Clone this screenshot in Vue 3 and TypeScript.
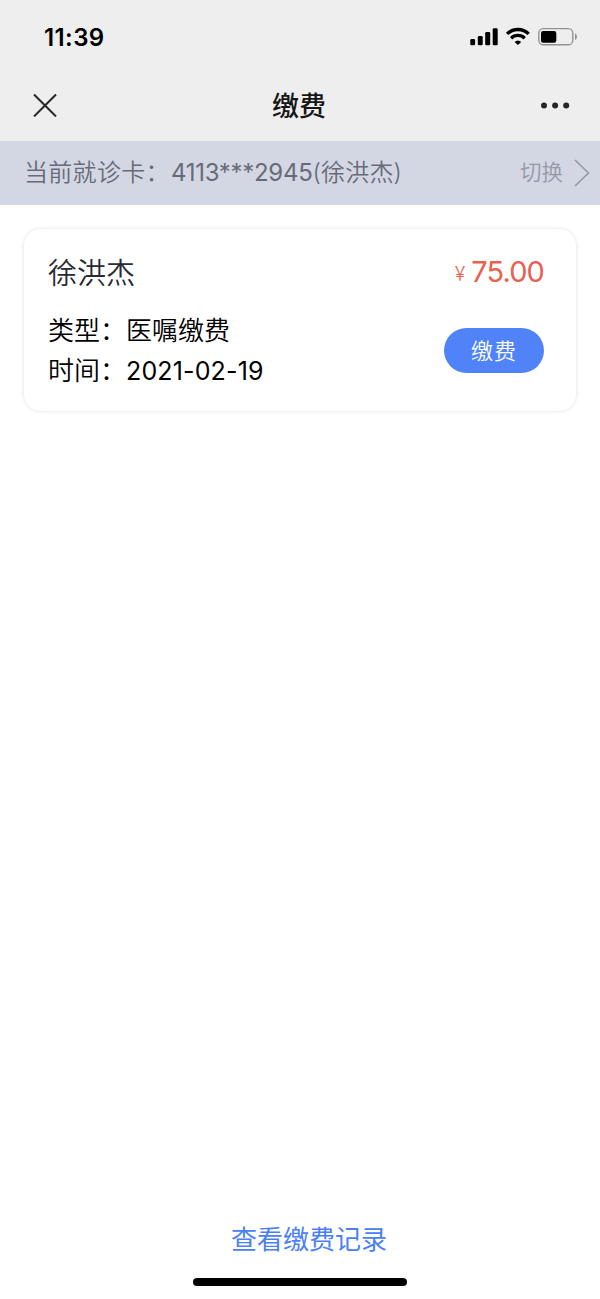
<script setup lang="ts">
interface Field {
  label: string
  value: string
  kind: string
}

const patient = '徐洪杰'
const cardNumber = '4113***2945'
const fields: Field[] = [
  { label: '类型：', value: '医嘱缴费', kind: 'han' },
  { label: '时间：', value: '2021-02-19', kind: 'date' },
]
</script>

<template>
  <div class="screen">
    <header class="top">
      <div class="status">
        <span class="clock">11:39</span>
        <svg class="indicators" width="110" height="20" viewBox="0 0 110 20">
          <rect x="0.3" y="12" width="4.8" height="6.2" rx="1.3" />
          <rect x="7.8" y="9" width="4.9" height="9.2" rx="1.3" />
          <rect x="15.2" y="5" width="5" height="13.2" rx="1.3" />
          <rect x="22.7" y="1.3" width="5" height="16.9" rx="1.3" />
          <g fill="none" stroke="#000" stroke-width="3.3">
            <path d="M37.1 6.9a15.5 15.5 0 0 1 21.6 0" />
            <path d="M41.1 11.2a9.8 9.8 0 0 1 13.6 0" />
          </g>
          <path d="M47.9 18.1 44.6 14.9a4.9 4.9 0 0 1 6.6 0z" />
          <rect x="68.8" y="1.6" width="34" height="16.2" rx="4.6" fill="none" stroke="#929292" stroke-width="1.4" />
          <rect x="71" y="4" width="15.3" height="11.8" rx="2.2" />
          <path d="M105 6.5c2.6.7 2.6 5.8 0 6.5z" fill="#929292" />
        </svg>
      </div>
      <div class="nav">
        <svg class="close" width="24" height="24" viewBox="0 0 24 24">
          <path d="M1 1.4 23 23.4M23 1.4 1 23.4" fill="none" stroke="#262729" stroke-width="2.1" />
        </svg>
        <h1 class="title">缴费</h1>
        <svg class="more" width="30" height="8" viewBox="0 0 30 8">
          <circle cx="4" cy="4.6" r="3" />
          <circle cx="15.1" cy="4.6" r="3" />
          <circle cx="26.2" cy="4.6" r="3" />
        </svg>
      </div>
    </header>

    <div class="current">
      <span class="current-label">当前就诊卡：</span>
      <span class="current-number">{{ cardNumber }}</span>
      <span class="current-name">({{ patient }})</span>
      <span class="switch">切换</span>
      <svg class="chevron" width="16" height="28" viewBox="0 0 16 28">
        <path d="M1 1 14.5 14 1 27" fill="none" stroke="#9698a8" stroke-width="1.6" />
      </svg>
    </div>

    <main class="body">
      <section class="card">
        <div class="info">
          <h2 class="name">{{ patient }}</h2>
          <div v-for="f in fields" :key="f.label" class="field">
            <span class="label">{{ f.label }}</span>
            <span :class="f.kind">{{ f.value }}</span>
          </div>
        </div>
        <div class="side">
          <div class="price"><span class="yen">￥</span><span class="amount">75.00</span></div>
          <button class="pay">缴费</button>
        </div>
      </section>
    </main>

    <footer class="foot">
      <a class="records">查看缴费记录</a>
      <div class="home"></div>
    </footer>
  </div>
</template>

<style>
body {
  margin: 0;
  background: #fff;
}
</style>

<style scoped>
.screen {
  display: flex;
  flex-direction: column;
  width: 600px;
  height: 1299px;
  overflow: hidden;
  background: #fff;
  color: #000;
  font-family: Inter, "Noto Sans CJK SC", sans-serif;
  white-space: nowrap;
}
.top {
  height: 141px;
  background: #eee;
}
.status {
  display: flex;
  align-items: center;
  height: 74px;
  padding: 0 20px 0 44px;
}
.clock {
  padding-top: 1px;
  font-size: 24px;
  font-weight: 600;
  line-height: 30px;
  letter-spacing: 0.4px;
}
.indicators {
  margin-left: auto;
}
.nav {
  display: grid;
  grid-template-columns: 100px 1fr 100px;
  align-items: center;
  height: 62px;
}
.close {
  margin-left: 33px;
}
.title {
  margin: 3px 0 0 -2px;
  text-align: center;
  font-size: 27px;
  font-weight: 500;
  line-height: 40px;
  color: #161616;
}
.more {
  margin-left: 40px;
  fill: #262626;
}
.current {
  display: flex;
  align-items: center;
  height: 64px;
  padding: 0 10px 0 24px;
  background: #d3d7e4;
  color: #686b77;
  font-size: 24px;
  line-height: 36px;
  font-weight: 350;
}
.current-label {
  width: 147px;
  letter-spacing: 0.3px;
}
.current-number {
  font-weight: 400;
  letter-spacing: -0.3px;
}
.current-name {
  letter-spacing: 0.2px;
}
.switch {
  margin-left: auto;
  margin-right: 11px;
  margin-top: -2px;
  font-size: 21.5px;
  color: #9698a8;
}
.body {
  flex: 1;
  padding: 24px;
}
.card {
  display: flex;
  justify-content: space-between;
  box-sizing: border-box;
  height: 182px;
  padding: 22px 32px 0 24px;
  border-radius: 17px;
  box-shadow: 0 0 4px rgba(0, 0, 0, 0.13);
}
.info {
  padding-top: 2px;
}
.name {
  margin: 0 0 16px;
  font-size: 29px;
  line-height: 42px;
  font-weight: 350;
  color: #292a35;
}
.field {
  display: flex;
  height: 40px;
  font-size: 26px;
  line-height: 40px;
  font-weight: 350;
}
.label {
  width: 78px;
}
.date {
  font-size: 25px;
  font-weight: 400;
  letter-spacing: 0.15px;
}
.side {
  display: flex;
  flex-direction: column;
  align-items: flex-end;
}
.price {
  display: flex;
  align-items: center;
  height: 42px;
  color: #e8604f;
  font-weight: 350;
}
.yen {
  margin-right: 1px;
  padding-top: 3px;
  font-size: 20px;
  line-height: 42px;
  transform: scaleX(0.8);
}
.amount {
  font-size: 29px;
  font-weight: 400;
  line-height: 42px;
  letter-spacing: -0.9px;
}
.pay {
  width: 100px;
  height: 45px;
  margin-top: 35px;
  padding: 0 0 2px;
  border: 0;
  border-radius: 23px;
  background: #5083f7;
  color: #fff;
  font: 350 22px/43px "Noto Sans CJK SC", sans-serif;
  letter-spacing: 1px;
}
.foot {
  display: flex;
  flex-direction: column;
  align-items: center;
  height: 80px;
}
.records {
  margin-left: 18px;
  padding-top: 1px;
  font-size: 26px;
  line-height: 40px;
  color: #4b80f5;
}
.home {
  width: 214px;
  height: 8px;
  margin-top: 18px;
  border-radius: 4px;
  background: #000;
}
</style>
